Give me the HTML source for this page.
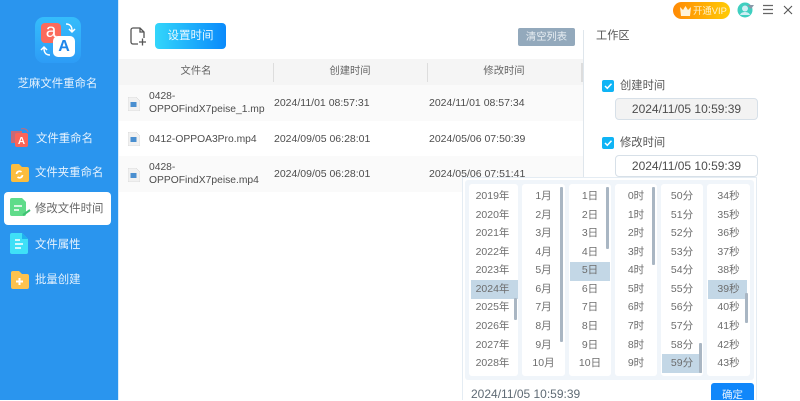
<!DOCTYPE html>
<html lang="zh"><head><meta charset="utf-8">
<style>
*{box-sizing:border-box}
html,body{margin:0;padding:0}
body{width:800px;height:400px;overflow:hidden;position:relative;background:#fff;font-family:"Liberation Sans","Noto Sans CJK SC",sans-serif;color:#555}
.a{position:absolute;white-space:nowrap}
.side{left:0;top:0;width:118px;height:400px;background:#2a95ee;border-right:0}
.nav{left:35px;font-size:11.4px;color:#e6f2fd;line-height:16px}
.hd{top:59px;height:26px;background:#f5f5f5;left:119px;width:464px}
.hdt{font-size:10.3px;color:#666;top:65px;line-height:14px;text-align:center}
.sep{top:63px;width:1px;height:19px;background:#ddd}
.cell{font-size:10.5px;color:#4d4d4d;line-height:14px}
.fn{font-size:10.3px;line-height:12.5px}
.col{top:184px;height:192px;background:#fff;border-radius:3px}
.it{position:absolute;left:0;width:100%;text-align:center;font-size:10.5px;line-height:14px;color:#6d6d6d}
.sel{position:absolute;height:18.5px;background:#c3d7e6}
.bar{position:absolute;width:2.5px;background:#a9b6c3;border-radius:1px}
.cb{width:12px;height:12px;background:#0fb4f5;border-radius:2px}
.inp{left:615px;width:143px;height:22px;border:1px solid #d7e0e8;border-radius:4px;text-align:center;font-size:12px;line-height:20px;color:#4d4d4d}
</style></head><body>

<div class="a side"></div>
<div class="a" style="left:118px;top:0;width:1px;height:400px;background:#d8ecfb"></div>

<div class="a" style="left:35px;top:17px;width:46px;height:46px;border-radius:9px;background:linear-gradient(180deg,#35bdfb,#2d9cf6)"></div>
<div class="a" style="left:41px;top:23px;width:20px;height:20px;border-radius:4px;background:#fb6a5c;color:#fff;font-size:19px;line-height:18px;text-align:center">a</div>
<div class="a" style="left:53px;top:36px;width:22px;height:21px;border-radius:5px;background:#fff;color:#1f86ea;font-size:16px;font-weight:bold;line-height:21px;text-align:center">A</div>
<svg class="a" style="left:35px;top:17px" width="46" height="46" fill="none" stroke="#fff" stroke-width="1.5"><path d="M31 7c4 0 6 2 6 7M34 12l3 3 3-3M15 38c-4 0-6-2-6-7M6 33l3-3 3 3"/></svg>
<div class="a" style="left:0;width:115px;top:76px;text-align:center;font-size:11.4px;line-height:16px;color:#e6f2fd">芝麻文件重命名</div>

<svg class="a" style="left:10px;top:127px" width="20" height="21"><path d="M1 4h11v12H1z" fill="#c66a78"/><path d="M11 2c3-1 6 0 7 3" stroke="#c66a78" fill="none"/><rect x="5" y="6" width="13" height="14" rx="2" fill="#fb6458"/><text x="11.500" y="17" font-size="10" font-weight="bold" fill="#fff" text-anchor="middle" font-family="Liberation Sans">A</text></svg>
<div class="a nav" style="top:131px;left:36px">文件重命名</div>
<svg class="a" style="left:10px;top:163px" width="19" height="19"><path d="M1 3a2 2 0 0 1 2-2h6l3 3h5a2 2 0 0 1 2 2v11a2 2 0 0 1-2 2H3a2 2 0 0 1-2-2z" fill="#fbbd3f"/><path d="M6.500 11a3 3 0 0 1 5-2M12.500 12a3 3 0 0 1-5 2" fill="none" stroke="#fff" stroke-width="1.700"/></svg>
<div class="a nav" style="top:165px">文件夹重命名</div>

<div class="a" style="left:4px;top:192px;width:107px;height:33px;background:#fff;border-radius:4px"></div>
<svg class="a" style="left:9px;top:197px" width="23" height="21"><path d="M1 3a2 2 0 0 1 2-2h10l4 4v12a2 2 0 0 1-2 2H3a2 2 0 0 1-2-2z" fill="#5fdc8a"/><path d="M5 9h8M5 13h5" stroke="#fff" stroke-width="1.500"/><path d="M14 18l7-5" stroke="#3fc274" stroke-width="2"/></svg>
<div class="a" style="left:35px;top:201px;font-size:11.4px;line-height:16px;color:#666">修改文件时间</div>

<svg class="a" style="left:10px;top:233px" width="18" height="21"><path d="M0 2a2 2 0 0 1 2-2h10l6 6v13a2 2 0 0 1-2 2H2a2 2 0 0 1-2-2z" fill="#3fe0f7"/><path d="M12 0l6 6h-6z" fill="#1fb2ee"/><path d="M5 7h5M5 11h8M5 15h6" stroke="#fff" stroke-width="1.500"/></svg>
<div class="a nav" style="top:237px">文件属性</div>
<svg class="a" style="left:10px;top:270px" width="19" height="19"><path d="M1 3a2 2 0 0 1 2-2h6l3 3h5a2 2 0 0 1 2 2v11a2 2 0 0 1-2 2H3a2 2 0 0 1-2-2z" fill="#fcc24e"/><path d="M6 11.500h7M9.500 8v7" stroke="#fff" stroke-width="2"/></svg>
<div class="a nav" style="top:272px">批量创建</div>

<svg class="a" style="left:130px;top:27px" width="17" height="20" fill="none" stroke="#555" stroke-width="1.300"><path d="M8 17H3a2 2 0 0 1-2-2V3a2 2 0 0 1 2-2h7l4 4v6M10 1v4h4M9 15h7M12.500 11.500v7"/></svg>
<div class="a" style="left:155px;top:23px;width:71px;height:26px;border-radius:4px;background:linear-gradient(90deg,#33d6fb,#0a8afb);color:#e8f8ff;font-size:11.5px;line-height:26px;text-align:center">设置时间</div>
<div class="a" style="left:518px;top:28px;width:57px;height:18px;border-radius:2px;background:#93a9bc;color:#e8eef3;font-size:10.3px;line-height:20px;text-align:center">清空列表</div>

<div class="a hd"></div>
<div class="a" style="left:119px;top:85px;width:464px;height:36px;background:#fafafa"></div>
<div class="a" style="left:119px;top:156px;width:464px;height:36px;background:#fafafa"></div>
<div class="a sep" style="left:273px"></div><div class="a sep" style="left:427px"></div><div class="a sep" style="left:581px;width:2px"></div>
<div class="a hdt" style="left:119px;width:154px">文件名</div>
<div class="a hdt" style="left:273px;width:154px">创建时间</div>
<div class="a hdt" style="left:427px;width:154px">修改时间</div>

<svg class="a" style="left:128px;top:97px" width="12" height="14"><path d="M0 0h8l4 4v10H0z" fill="#f1f1f1" stroke="#ccc" stroke-width=".5"/><rect x="2.500" y="5" width="6" height="5" fill="#4a8fd0"/></svg>
<svg class="a" style="left:128px;top:132px" width="12" height="14"><path d="M0 0h8l4 4v10H0z" fill="#f1f1f1" stroke="#ccc" stroke-width=".5"/><rect x="2.500" y="5" width="6" height="5" fill="#4a8fd0"/></svg>
<svg class="a" style="left:128px;top:168px" width="12" height="14"><path d="M0 0h8l4 4v10H0z" fill="#f1f1f1" stroke="#ccc" stroke-width=".5"/><rect x="2.500" y="5" width="6" height="5" fill="#4a8fd0"/></svg>

<div class="a cell fn" style="left:149px;top:91px">0428-<br>OPPOFindX7peise_1.mp</div>
<div class="a cell" style="left:274px;top:96px">2024/11/01 08:57:31</div>
<div class="a cell" style="left:429px;top:96px">2024/11/01 08:57:34</div>
<div class="a cell fn" style="left:149px;top:133px;line-height:14px">0412-OPPOA3Pro.mp4</div>
<div class="a cell" style="left:274px;top:132px">2024/09/05 06:28:01</div>
<div class="a cell" style="left:429px;top:132px">2024/05/06 07:50:39</div>
<div class="a cell fn" style="left:149px;top:162px">0428-<br>OPPOFindX7peise.mp4</div>
<div class="a cell" style="left:274px;top:167px">2024/09/05 06:28:01</div>
<div class="a cell" style="left:429px;top:167px">2024/05/06 07:51:41</div>

<div class="a" style="left:583px;top:30px;width:1px;height:150px;background:#dfe6ec"></div>
<div class="a" style="left:596px;top:28px;font-size:11.2px;line-height:16px;color:#555">工作区</div>

<div class="a" style="left:673px;top:2px;width:57px;height:17px;border-radius:9px;background:linear-gradient(90deg,#ff8a05,#ffcb05);color:#fff3cf;font-size:9.4px;line-height:18px;padding-left:20px">开通VIP</div>
<svg class="a" style="left:679px;top:5px" width="13" height="12"><path d="M1 2l3 3 2.500-4L9 5l3-3-1 9H2z" fill="#fff3d8"/></svg>
<svg class="a" style="left:737px;top:2px" width="18" height="16"><circle cx="8" cy="8" r="7.500" fill="#3fcfc0"/><circle cx="8" cy="6.500" r="3" fill="#cfeef3"/><path d="M3 13c1-4 9-4 10 0z" fill="#cfeef3"/><path d="M10 3h7l-3 4z" fill="#8a98a8"/></svg>
<svg class="a" style="left:762px;top:4px" width="12" height="11" stroke="#666" stroke-width="1.200"><path d="M1 1.500h10M1 5.500h10M1 9.500h10"/></svg>
<svg class="a" style="left:783px;top:5px" width="10" height="10" stroke="#555" stroke-width="1.100"><path d="M1 1l8 8M9 1l-8 8"/></svg>

<div class="a cb" style="left:602px;top:80px"></div>
<svg class="a" style="left:602px;top:80px" width="12" height="12" fill="none" stroke="#fff" stroke-width="1.500"><path d="M3 6l2.300 2.300L9.500 3.800"/></svg>
<div class="a" style="left:620px;top:78px;font-size:11.300px;line-height:16px;color:#555">创建时间</div>
<div class="a inp" style="top:98px;background:#f3f3f3">2024/11/05 10:59:39</div>
<div class="a cb" style="left:602px;top:137px"></div>
<svg class="a" style="left:602px;top:137px" width="12" height="12" fill="none" stroke="#fff" stroke-width="1.500"><path d="M3 6l2.300 2.300L9.500 3.800"/></svg>
<div class="a" style="left:620px;top:135px;font-size:11.300px;line-height:16px;color:#555">修改时间</div>
<div class="a inp" style="top:155px;background:#fff">2024/11/05 10:59:39</div>

<div class="a" style="left:462px;top:177px;width:295px;height:223px;background:#fff;border:1px solid #e4ecf3;border-bottom:0"></div>
<div class="a" style="left:465px;top:180px;width:289px;height:200px;background:#f0f5fa;border-radius:3px"></div>

<div class="a col" style="left:469px;width:49px">
<div class="sel" style="left:2px;top:96px;width:47px"></div><div class="bar" style="left:45px;top:114px;height:22px"></div>
<div class="it" style="top:5px;left:-1px">2019年</div><div class="it" style="top:24px;left:-1px">2020年</div><div class="it" style="top:42px;left:-1px">2021年</div><div class="it" style="top:61px;left:-1px">2022年</div><div class="it" style="top:79px;left:-1px">2023年</div><div class="it" style="top:98px;left:-1px">2024年</div><div class="it" style="top:116px;left:-1px">2025年</div><div class="it" style="top:135px;left:-1px">2026年</div><div class="it" style="top:154px;left:-1px">2027年</div><div class="it" style="top:172px;left:-1px">2028年</div>
</div>
<div class="a col" style="left:522px;width:43px">
<div class="bar" style="left:38px;top:3px;height:155px"></div>
<div class="it" style="top:5px">1月</div><div class="it" style="top:24px">2月</div><div class="it" style="top:42px">3月</div><div class="it" style="top:61px">4月</div><div class="it" style="top:79px">5月</div><div class="it" style="top:98px">6月</div><div class="it" style="top:116px">7月</div><div class="it" style="top:135px">8月</div><div class="it" style="top:154px">9月</div><div class="it" style="top:172px">10月</div>
</div>
<div class="a col" style="left:569px;width:42px">
<div class="sel" style="left:1px;top:78px;width:40px"></div><div class="bar" style="left:37px;top:3px;height:62px"></div>
<div class="it" style="top:5px">1日</div><div class="it" style="top:24px">2日</div><div class="it" style="top:42px">3日</div><div class="it" style="top:61px">4日</div><div class="it" style="top:79px">5日</div><div class="it" style="top:98px">6日</div><div class="it" style="top:116px">7日</div><div class="it" style="top:135px">8日</div><div class="it" style="top:154px">9日</div><div class="it" style="top:172px">10日</div>
</div>
<div class="a col" style="left:615px;width:42px">
<div class="bar" style="left:37px;top:3px;height:78px"></div>
<div class="it" style="top:5px">0时</div><div class="it" style="top:24px">1时</div><div class="it" style="top:42px">2时</div><div class="it" style="top:61px">3时</div><div class="it" style="top:79px">4时</div><div class="it" style="top:98px">5时</div><div class="it" style="top:116px">6时</div><div class="it" style="top:135px">7时</div><div class="it" style="top:154px">8时</div><div class="it" style="top:172px">9时</div>
</div>
<div class="a col" style="left:661px;width:42px">
<div class="sel" style="left:1px;top:170px;width:40px"></div><div class="bar" style="left:38px;top:159px;height:30px"></div>
<div class="it" style="top:5px">50分</div><div class="it" style="top:24px">51分</div><div class="it" style="top:42px">52分</div><div class="it" style="top:61px">53分</div><div class="it" style="top:79px">54分</div><div class="it" style="top:98px">55分</div><div class="it" style="top:116px">56分</div><div class="it" style="top:135px">57分</div><div class="it" style="top:154px">58分</div><div class="it" style="top:172px">59分</div>
</div>
<div class="a col" style="left:707px;width:43px">
<div class="sel" style="left:1px;top:96px;width:39px"></div><div class="bar" style="left:38px;top:109px;height:30px"></div>
<div class="it" style="top:5px">34秒</div><div class="it" style="top:24px">35秒</div><div class="it" style="top:42px">36秒</div><div class="it" style="top:61px">37秒</div><div class="it" style="top:79px">38秒</div><div class="it" style="top:98px">39秒</div><div class="it" style="top:116px">40秒</div><div class="it" style="top:135px">41秒</div><div class="it" style="top:154px">42秒</div><div class="it" style="top:172px">43秒</div>
</div>

<div class="a" style="left:471px;top:387px;font-size:12px;line-height:14px;color:#5f6b75">2024/11/05 10:59:39</div>
<div class="a" style="left:711px;top:383px;width:43px;height:17px;background:#1187fa;border-radius:3px 3px 0 0;color:#e6f3ff;font-size:10.500px;line-height:24px;text-align:center;overflow:hidden">确定</div>
</body></html>
